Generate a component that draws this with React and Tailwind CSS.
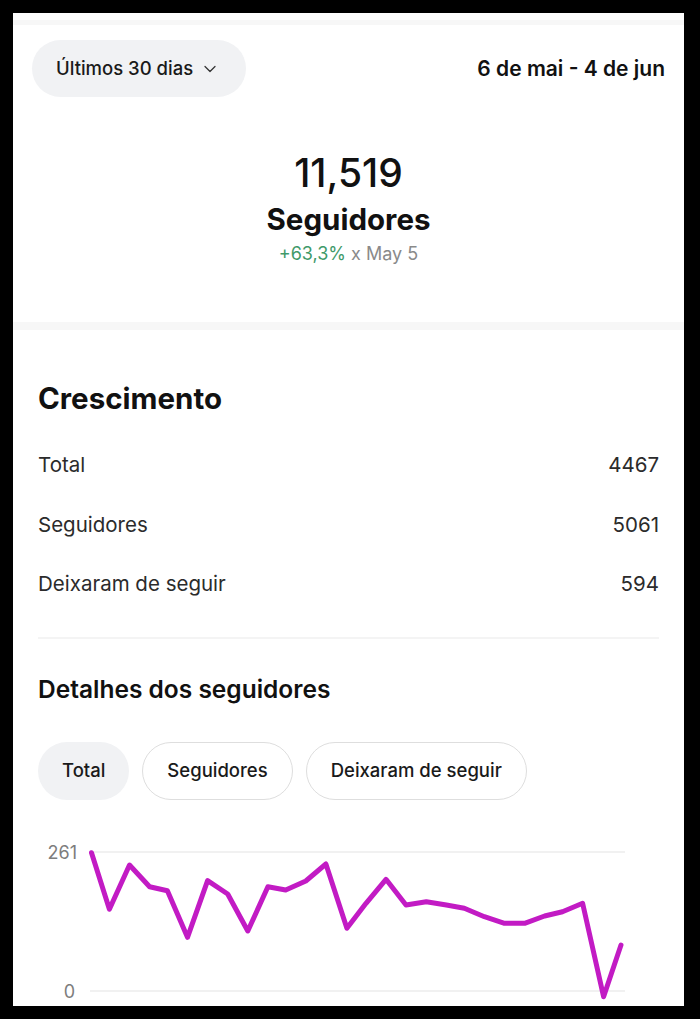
import React from "react";
import { ChevronDown } from "lucide-react";

const pts = [
  [78.5, 52.7], [96.4, 109.3], [116.5, 65], [136.6, 86.7], [154.4, 90.7], [174.5, 137.3],
  [194.6, 80.7], [214.7, 94], [234.8, 131], [254.9, 86.7], [272.7, 90], [292.8, 81],
  [312.9, 64], [333.9, 128.3], [353, 103.3], [373, 79.3], [393, 105], [413.3, 101.7],
  [433.4, 105], [451.3, 108.3], [471.4, 116.7], [491.5, 123.3], [511.6, 123.3], [531.6, 116],
  [549.5, 111.7], [569.6, 103.3], [590.6, 196.7], [608, 145],
];

function Row({ label, value }) {
  return (
    <div className="flex h-[59.5px] items-center justify-between text-[20.5px] text-[#2b2b2b]">
      <span>{label}</span>
      <span>{value}</span>
    </div>
  );
}

export default function App() {
  return (
    <div
      className="w-[700px] h-[1019px] bg-black pt-[13px] pl-[13px] pr-[16px] pb-[13px] overflow-hidden"
      style={{ fontFamily: "Inter, 'Noto Sans', sans-serif" }}
    >
      <div className="bg-white h-full flex flex-col overflow-hidden">
        <div className="h-[5px] mt-[7px] bg-[#f7f7f7]" />
        <div className="mt-[15px] flex items-center justify-between pl-[19px] pr-[19px]">
          <div className="h-[57px] pl-[24px] pr-[26px] rounded-full bg-[#f1f2f4] flex items-center gap-[7px] text-[18.5px] font-medium text-[#1a1a1a]">
            <span>Últimos 30 dias</span>
            <ChevronDown size={20} strokeWidth={1.5} className="text-[#333]" />
          </div>
          <div className="text-[21px] font-semibold text-[#111]">6 de mai - 4 de jun</div>
        </div>

        <div className="mt-[54px] flex flex-col items-center">
          <div className="text-[39px] leading-[44px] font-medium text-[#111]">11,519</div>
          <div className="mt-[7px] text-[29.5px] leading-[34px] font-bold text-[#111]">Seguidores</div>
          <div className="mt-[7px] text-[18px] leading-[22px]">
            <span className="text-[#3f9a6a]">+63,3%</span>
            <span className="text-[#8a8a8a]"> x May 5</span>
          </div>
        </div>

        <div className="mt-[57px] h-[8px] bg-[#f7f7f7]" />

        <div className="px-[25px]">
          <div className="mt-[52px] text-[29.5px] leading-[32px] font-bold text-[#111]">Crescimento</div>
          <div className="mt-[22px]">
            <Row label="Total" value="4467" />
            <Row label="Seguidores" value="5061" />
            <Row label="Deixaram de seguir" value="594" />
          </div>
          <div className="mt-[22px] h-[2px] bg-[#f4f4f4]" />
          <div className="mt-[36px] text-[24.5px] leading-[28px] font-semibold text-[#111]">Detalhes dos seguidores</div>
          <div className="mt-[39px] flex gap-[13px] text-[18.5px] font-medium text-[#1a1a1a]">
            <div className="h-[58px] px-[24px] rounded-full bg-[#f1f2f4] flex items-center">Total</div>
            <div className="h-[58px] px-[24px] rounded-full border border-[#dedede] flex items-center">Seguidores</div>
            <div className="h-[58px] px-[24px] rounded-full border border-[#dedede] flex items-center">Deixaram de seguir</div>
          </div>
        </div>

        <svg width="671" height="206" className="block" style={{ fontFamily: "Inter, sans-serif" }}>
          <line x1="77" y1="52" x2="612" y2="52" stroke="#ececec" strokeWidth="1.5" />
          <line x1="77" y1="191" x2="612" y2="191" stroke="#ececec" strokeWidth="1.5" />
          <text x="64" y="58.5" textAnchor="end" fontSize="18" fill="#7d7d7d">261</text>
          <text x="62" y="197.5" textAnchor="end" fontSize="18" fill="#7d7d7d">0</text>
          <polyline
            points={pts.map((p) => p.join(",")).join(" ")}
            fill="none"
            stroke="#c21bc4"
            strokeWidth="5"
            strokeLinejoin="round"
            strokeLinecap="round"
          />
        </svg>
      </div>
    </div>
  );
}
